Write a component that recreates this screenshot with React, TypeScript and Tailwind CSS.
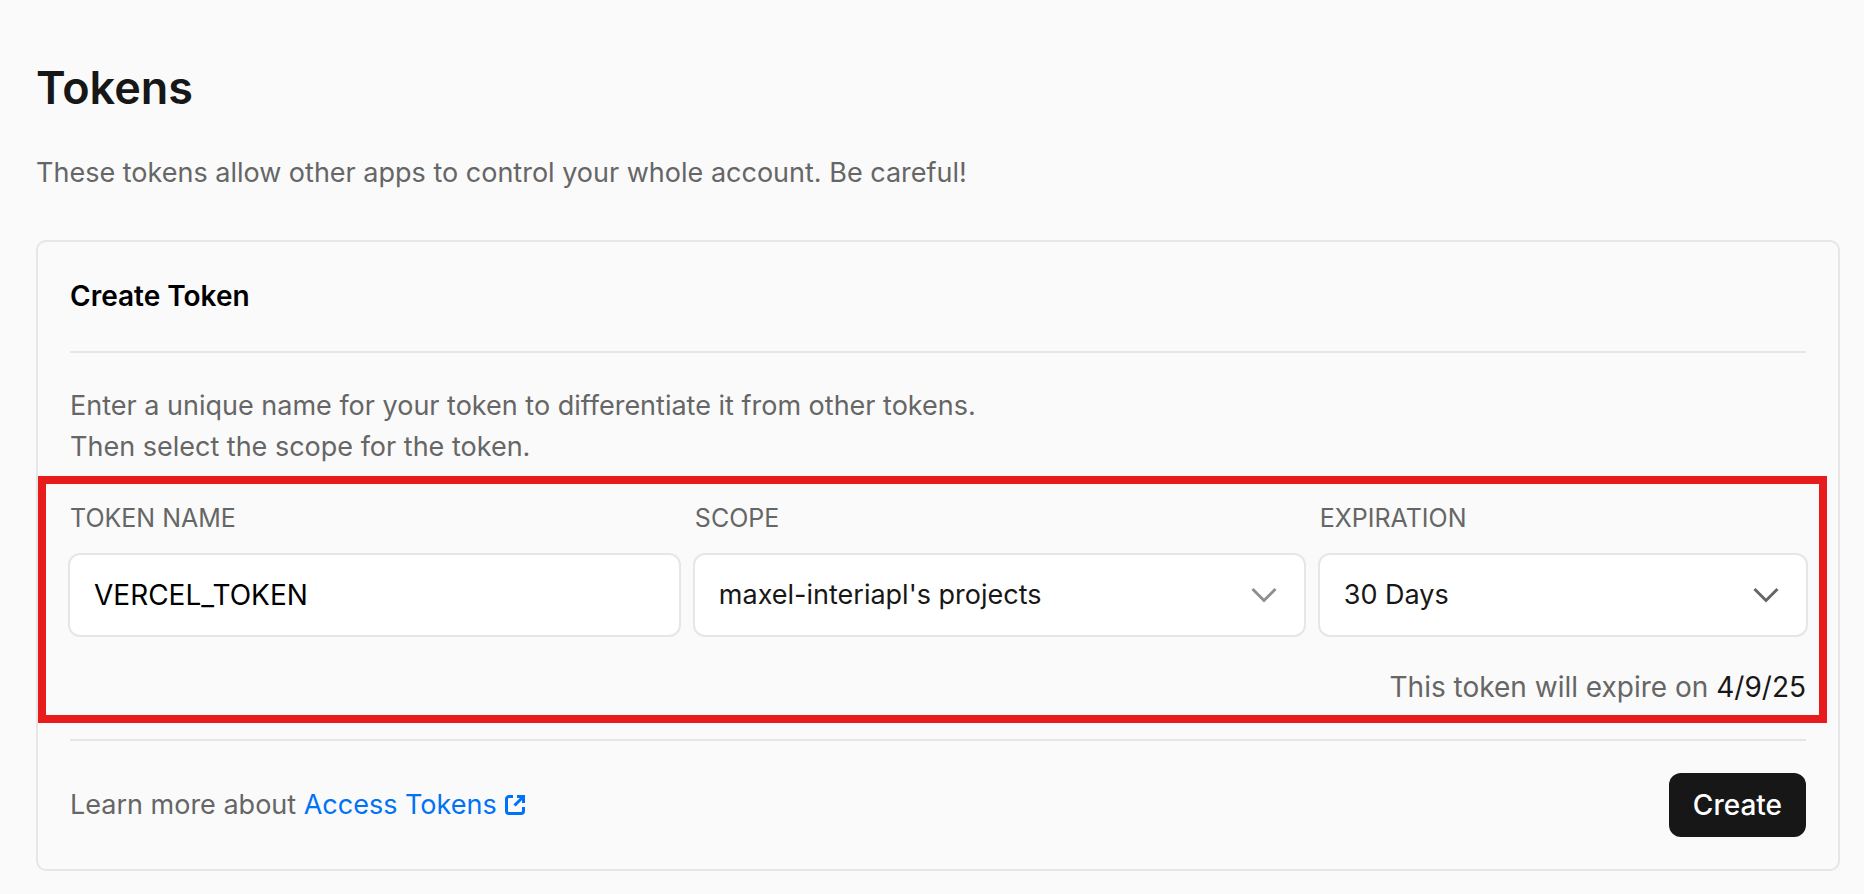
import { useState } from "react";
import type { ReactNode } from "react";

function Chevron({ className }: { className: string }) {
  return (
    <svg
      className={`pointer-events-none absolute top-1/2 right-7 size-7 -translate-y-1/2 ${className}`}
      viewBox="0 0 28 28"
      fill="none"
      stroke="currentColor"
      strokeWidth="3"
      aria-hidden="true"
    >
      <path d="M2.5 8 14 19.5 25.5 8" />
    </svg>
  );
}

function ExternalIcon() {
  return (
    <svg className="size-5" viewBox="0 0 20 20" fill="none" stroke="currentColor" strokeWidth="3" aria-hidden="true">
      <path d="M8 1.5H4A2.5 2.5 0 0 0 1.5 4V16A2.5 2.5 0 0 0 4 18.5H16A2.5 2.5 0 0 0 18.5 16V12" />
      <path d="M12 1.5H18.5V8M18 2 9.5 10.5" />
    </svg>
  );
}

function Field({ id, label, children }: { id: string; label: string; children: ReactNode }) {
  return (
    <div className="flex min-w-0 flex-col gap-[19px]">
      <label htmlFor={id} className="pl-0.5 text-[25px] leading-8 text-[#666666] uppercase">
        {label}
      </label>
      <div className="relative">{children}</div>
    </div>
  );
}

const control =
  "h-[84px] w-full appearance-none rounded-xl border-2 border-[#e6e6e6] bg-white px-6 outline-none focus:border-[#a8a8a8]";

export default function App() {
  const [name, setName] = useState("VERCEL_TOKEN");

  return (
    <main className="min-h-screen bg-[#fafafa] pt-[60px] pr-6 pb-[23px] pl-9 font-['Inter',sans-serif] text-[27px] leading-10 text-[#666666]">
      <h1 className="text-[45px] leading-14 font-semibold text-[#171717]">Tokens</h1>
      <p className="mt-[37px]">These tokens allow other apps to control your whole account. Be careful!</p>

      <form className="mt-[47px] rounded-[10px] border-2 border-[#e6e6e6] px-8" onSubmit={(e) => e.preventDefault()}>
        <h2 className="border-b-2 border-[#e6e6e6] pt-[34px] pb-[35px] text-[28px] font-semibold text-black">
          Create Token
        </h2>
        <p className="mt-8 leading-[41px]">
          Enter a unique name for your token to differentiate it from other tokens.
          <br />
          Then select the scope for the token.
        </p>

        <div className="relative mt-[9px] pt-[26px] pb-4">
          <div className="pointer-events-none absolute inset-y-0 -right-[21px] -left-8 border-8 border-[#e81c1c]" />
          <div className="-mx-0.5 grid grid-cols-[5fr_5fr_4fr] gap-3">
            <Field id="token-name" label="Token Name">
              <input
                id="token-name"
                type="text"
                className={`${control} text-[28px] text-black`}
                value={name}
                onChange={(e) => setName(e.target.value)}
              />
            </Field>
            <Field id="scope" label="Scope">
              <select id="scope" className={`${control} text-[#171717]`}>
                <option>maxel-interiapl's projects</option>
              </select>
              <Chevron className="text-[#8f8f8f]" />
            </Field>
            <Field id="expiration" label="Expiration">
              <select id="expiration" className={`${control} text-[#171717]`}>
                <option>30 Days</option>
              </select>
              <Chevron className="text-[#666666]" />
            </Field>
          </div>
          <p className="mt-[30px] text-right text-[28px]">
            This token will expire on <span className="text-[#171717]">4/9/25</span>
          </p>
        </div>

        <div className="mt-4 flex items-center justify-between border-t-2 border-[#e6e6e6] py-8">
          <p>
            Learn more about{" "}
            <a href="#access-tokens" className="inline-flex items-center gap-2 text-[#0072f5]">
              Access Tokens <ExternalIcon />
            </a>
          </p>
          <button type="submit" className="h-16 rounded-xl bg-[#171717] px-6 text-[28px] font-medium text-white">
            Create
          </button>
        </div>
      </form>
    </main>
  );
}
